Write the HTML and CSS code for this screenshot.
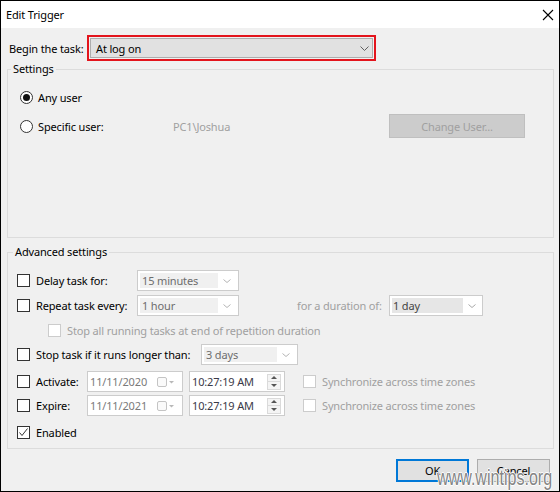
FILE: index.html
```html
<!DOCTYPE html>
<html>
<head>
<meta charset="utf-8">
<link rel="stylesheet" href="styles.css">
</head>
<body>
<div class="window">
  <div class="titlebar">
    <span class="title">Edit Trigger</span>
    <svg class="close" width="12" height="12" viewBox="0 0 12 12"><path d="M1 1 L11 11 M11 1 L1 11" stroke="#000" stroke-width="1.1" fill="none"/></svg>
  </div>
  <div class="content">
    <div class="begin-row">
      <span class="begin-label">Begin the task:</span>
      <div class="hl">
        <div class="combo-main">
          <span>At log on</span>
          <svg width="9" height="5" viewBox="0 0 9 5"><path d="M0.5 0.5 L4.5 4.5 L8.5 0.5" fill="none" stroke="#606060"/></svg>
        </div>
      </div>
    </div>

    <fieldset class="group settings">
      <legend>Settings</legend>
      <div class="settings-inner">
        <div class="rrow any">
          <span class="radio checked"></span><span>Any user</span>
        </div>
        <div class="rrow spec">
          <span class="radio"></span><span class="spec-label">Specific user:</span>
          <span class="user muted">PC1\Joshua</span>
          <button class="btn disabled wide">Change User...</button>
        </div>
      </div>
    </fieldset>

    <fieldset class="group advanced">
      <legend>Advanced settings</legend>
      <div class="adv-inner">
        <div class="arow h21">
          <div class="cbl w120"><span class="cb"></span><span>Delay task for:</span></div>
          <div class="combo w102"><span class="val">15 minutes</span><span class="arr"><svg width="8" height="4" viewBox="0 0 8 4"><path d="M0.5 0.5 L4 3.5 L7.5 0.5" fill="none" stroke="#b4b4b4"/></svg></span></div>
        </div>
        <div class="arow h21 gap4">
          <div class="cbl w120"><span class="cb"></span><span>Repeat task every:</span></div>
          <div class="combo w102"><span class="val">1 hour</span><span class="arr"><svg width="8" height="4" viewBox="0 0 8 4"><path d="M0.5 0.5 L4 3.5 L7.5 0.5" fill="none" stroke="#b4b4b4"/></svg></span></div>
          <span class="dur-label muted">for a duration of:</span>
          <div class="combo w94 enabled"><span class="val sel">1 day</span><span class="arr"><svg width="8" height="4" viewBox="0 0 8 4"><path d="M0.5 0.5 L4 3.5 L7.5 0.5" fill="none" stroke="#a8a8a8"/></svg></span></div>
        </div>
        <div class="arow h20 gap4 indent">
          <div class="cbl"><span class="cb dis"></span><span class="muted">Stop all running tasks at end of repetition duration</span></div>
        </div>
        <div class="arow h21 gap4">
          <div class="cbl w184"><span class="cb"></span><span>Stop task if it runs longer than:</span></div>
          <div class="combo w97"><span class="val">3 days</span><span class="arr"><svg width="8" height="4" viewBox="0 0 8 4"><path d="M0.5 0.5 L4 3.5 L7.5 0.5" fill="none" stroke="#b4b4b4"/></svg></span></div>
        </div>
        <div class="arow h21 gap6">
          <div class="cbl w70"><span class="cb"></span><span>Activate:</span></div>
          <div class="picker date"><span class="ptext">11/11/2020</span><span class="cal"><svg width="18" height="10" viewBox="0 0 18 10"><rect x="0.5" y="0.5" width="9" height="9" rx="1.5" fill="#fafafa" stroke="#c4c4c4"/><path d="M12 4 L17 4 L14.5 6.5 Z" fill="#b8b8b8"/></svg></span></div>
          <div class="picker time"><span class="ptext">10:27:19 AM</span><span class="spin"><span class="sp up"></span><span class="sp down"></span></span></div>
          <div class="cbl sync"><span class="cb dis"></span><span class="muted">Synchronize across time zones</span></div>
        </div>
        <div class="arow h21 gap3">
          <div class="cbl w70"><span class="cb"></span><span>Expire:</span></div>
          <div class="picker date"><span class="ptext">11/11/2021</span><span class="cal"><svg width="18" height="10" viewBox="0 0 18 10"><rect x="0.5" y="0.5" width="9" height="9" rx="1.5" fill="#fafafa" stroke="#c4c4c4"/><path d="M12 4 L17 4 L14.5 6.5 Z" fill="#b8b8b8"/></svg></span></div>
          <div class="picker time"><span class="ptext">10:27:19 AM</span><span class="spin"><span class="sp up"></span><span class="sp down"></span></span></div>
          <div class="cbl sync"><span class="cb dis"></span><span class="muted">Synchronize across time zones</span></div>
        </div>
        <div class="arow h20 gap6">
          <div class="cbl"><span class="cb checked"><svg width="11" height="11" viewBox="0 0 11 11"><path d="M1.5 5.5 L4 8.5 L9.5 1.5" fill="none" stroke="#333" stroke-width="1"/></svg></span><span>Enabled</span></div>
        </div>
      </div>
    </fieldset>

    <div class="buttons">
      <button class="btn default">OK</button>
      <button class="btn">Cancel</button>
    </div>
  </div>
  <div class="watermark">www.wintips.org</div>
</div>
</body>
</html>
```
FILE: styles.css
```css
* { box-sizing: border-box; }
html, body { margin: 0; padding: 0; }
body {
  width: 560px;
  height: 492px;
  font-family: "Noto Sans", "Open Sans", sans-serif;
  font-size: 11px;
  letter-spacing: -0.15px;
  color: #000;
  background: #fff;
}
.window {
  position: relative;
  width: 560px;
  height: 492px;
  border: 1px solid #000;
  background: #f0f0f0;
  display: flex;
  flex-direction: column;
  overflow: hidden;
}
.titlebar {
  flex: none;
  height: 27px;
  background: #fff;
  display: flex;
  align-items: center;
  justify-content: space-between;
  padding: 0 5px 0 5px;
}
.title { font-size: 11px; }
.content {
  flex: 1;
  display: flex;
  flex-direction: column;
  padding: 0 5px 0 6px;
}
.begin-row {
  display: flex;
  align-items: center;
  height: 26px;
  margin-top: 7px;
}
.begin-label { width: 80px; padding-left: 2px; }
.hl {
  width: 289px;
  height: 26px;
  border: 2px solid #e3141c;
  padding: 1px;
}
.combo-main {
  height: 100%;
  border: 1px solid #adadad;
  background: #e1e1e1;
  display: flex;
  align-items: center;
  justify-content: space-between;
  padding: 0 3px 0 5px;
}
.group {
  margin: 0;
  padding: 0;
  width: 547px;
  border: 1px solid #dcdcdc;
}
.group legend {
  padding: 0 2px;
  line-height: 16px;
}
.settings legend { margin-left: 3px; }
.advanced legend { margin-left: 5px; }
.advanced { margin-top: 6px; }
.settings-inner { padding: 10px 0 99px 12px; }
.rrow { display: flex; align-items: center; }
.rrow.any { height: 20px; }
.rrow.spec { height: 24px; margin-top: 7px; }
.radio {
  width: 13px;
  height: 13px;
  flex: none;
  border: 1px solid #333;
  border-radius: 50%;
  background: #fff;
  display: flex;
  align-items: center;
  justify-content: center;
  margin-right: 5px;
}
.radio.checked::after {
  content: "";
  width: 7px;
  height: 7px;
  border-radius: 50%;
  background: #111;
}
.spec-label { width: 135px; }
.user { width: 216px; }
.muted { color: #a0a0a0; }
.btn {
  font: inherit;
  letter-spacing: inherit;
  color: #000;
  width: 73px;
  height: 23px;
  background: #e1e1e1;
  border: 1px solid #adadad;
  padding: 0;
  margin: 0;
}
.btn.wide { width: 136px; height: 24px; }
.btn.disabled { background: #cccccc; border-color: #bfbfbf; color: #a0a0a0; }
.btn.default { border: 2px solid #0078d7; }
.adv-inner { padding: 10px 0 6px 9px; }
.arow { display: flex; align-items: center; }
.h20 { height: 20px; }
.h21 { height: 21px; }
.gap3 { margin-top: 3px; }
.gap4 { margin-top: 4px; }
.gap6 { margin-top: 6px; }
.indent { padding-left: 31px; }
.cbl { display: flex; align-items: center; gap: 6px; flex: none; }
.w120 { width: 120px; }
.w184 { width: 184px; }
.w70 { width: 70px; }
.cb {
  width: 13px;
  height: 13px;
  flex: none;
  border: 1px solid #333;
  background: #fff;
  display: flex;
  align-items: center;
  justify-content: center;
}
.cb.dis { border-color: #cccccc; }
.combo {
  height: 21px;
  border: 1px solid #cccccc;
  background: #fff;
  display: flex;
  align-items: stretch;
  padding: 2px;
  flex: none;
}
.combo .val {
  flex: 1;
  background: #f0f0f0;
  color: #6d6d6d;
  padding-left: 2px;
  display: flex;
  align-items: center;
}
.combo.enabled .val { flex: none; width: 71px; background: #e6e6e6; color: #444; padding-left: 1px; }
.combo.enabled .arr { flex: 1; }
.combo .arr {
  width: 18px;
  display: flex;
  align-items: center;
  justify-content: center;
}
.w102 { width: 102px; }
.w97 { width: 97px; }
.w94 { width: 94px; }
.dur-label { width: 92px; margin-left: 58px; }
.picker {
  width: 96px;
  height: 21px;
  border: 1px solid #cccccc;
  background: #fff;
  display: flex;
  align-items: center;
  flex: none;
}
.picker .ptext { flex: 1; padding-left: 2px; }
.picker.date .ptext { color: #7a7a7a; }
.picker.time .ptext { color: #3a3a48; }
.picker.time { margin-left: 6px; }
.cal { display: flex; padding-right: 7px; }
.spin {
  display: flex;
  flex-direction: column;
  width: 14px;
  height: 16px;
  margin-right: 3px;
}
.sp {
  flex: 1;
  border: 1px solid #dadada;
  background: #f4f4f4;
  display: flex;
  align-items: center;
  justify-content: center;
}
.sp + .sp { border-top: none; }
.sp::after {
  content: "";
  width: 0;
  height: 0;
  border-left: 3px solid transparent;
  border-right: 3px solid transparent;
}
.sp.up::after { border-bottom: 3px solid #555; }
.sp.down::after { border-top: 3px solid #555; }
.sync { margin-left: 18px; }
.buttons {
  display: flex;
  justify-content: flex-end;
  gap: 8px;
  margin-top: 10px;
  margin-right: 4px;
}
.watermark {
  position: absolute;
  left: 436px;
  top: 466px;
  font-family: "Liberation Sans", Arial, sans-serif;
  font-size: 22px;
  line-height: 22px;
  letter-spacing: 0;
  color: #858585;
  transform: scaleX(0.73);
  transform-origin: left top;
  text-shadow: 1px 0 0 #fff, -1px 0 0 #fff, 0 1px 0 #fff, 0 -1px 0 #fff;
  white-space: nowrap;
}
```
